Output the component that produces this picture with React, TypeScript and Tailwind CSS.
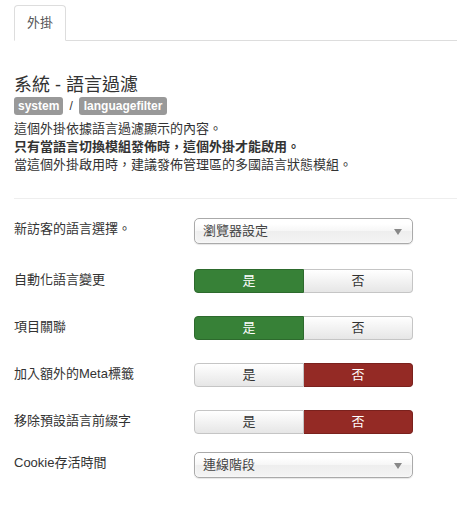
import React from "react";

const font = { fontFamily: '"Liberation Sans", "Noto Sans CJK TC", sans-serif' };

function Select({ value }: { value: string }) {
  return (
    <div className="relative w-[219px] h-[26px] rounded-[5px] border border-[#aaa] bg-[linear-gradient(#ffffff_20%,#f6f6f6_50%,#eeeeee_52%,#f4f4f4_100%)] shadow-[inset_0_0_3px_#fff,0_1px_1px_rgba(0,0,0,0.1)] flex items-center pl-[8px] text-[13px] text-[#444]">
      <span>{value}</span>
      <span className="absolute right-[10px] top-[10px] w-0 h-0 border-l-[4px] border-r-[4px] border-t-[6px] border-l-transparent border-r-transparent border-t-[#888]" />
    </div>
  );
}

function Toggle({ yes }: { yes: boolean }) {
  const off =
    "bg-[linear-gradient(#ffffff,#e6e6e6)] text-[#333] border-[#c5c5c5]";
  return (
    <div className="flex w-[219px] h-[24px] text-[13px]">
      <div
        className={
          "flex-1 flex items-center justify-center rounded-l-[4px] border " +
          (yes
            ? "bg-[#378137] text-white border-[#2d6a2d]"
            : off)
        }
      >
        是
      </div>
      <div
        className={
          "flex-1 flex items-center justify-center rounded-r-[4px] border border-l-0 " +
          (!yes
            ? "bg-[#942a25] text-white border-[#7a211d]"
            : off)
        }
      >
        否
      </div>
    </div>
  );
}

function Row({
  label,
  mt,
  children,
}: {
  label: string;
  mt: string;
  children: React.ReactNode;
}) {
  return (
    <div className={"flex items-start " + mt}>
      <div className="w-[180px] pt-[2px] leading-[18px] text-[13px] text-[#333]">{label}</div>
      {children}
    </div>
  );
}

export default function App() {
  return (
    <div className="w-[457px] h-[515px] bg-white overflow-hidden" style={font}>
      <div className="pt-[5px] pl-[14px]">
        <div className="flex border-b border-[#ddd] h-[36px]">
          <div className="h-[36px] px-[12px] border border-[#ddd] border-b-white rounded-t-[4px] bg-white flex items-center text-[13px] text-[#555] -mb-px">
            外掛
          </div>
        </div>
        <div className="mt-[34px] text-[18px] leading-[20px] text-[#333]">系統 - 語言過濾</div>
        <div className="mt-[2px] flex items-center gap-[6px] text-[12px]">
          <span className="bg-[#999] text-white font-bold rounded-[3px] px-[4px] h-[18px] leading-[18px]">system</span>
          <span className="text-[#333]">/</span>
          <span className="bg-[#999] text-white font-bold rounded-[3px] px-[5px] h-[18px] leading-[18px]">languagefilter</span>
        </div>
        <div className="mt-[5px] text-[13px] leading-[18px] text-[#333]">
          <p>這個外掛依據語言過濾顯示的內容。</p>
          <p className="font-bold">只有當語言切換模組發佈時，這個外掛才能啟用。</p>
          <p>當這個外掛啟用時，建議發佈管理區的多國語言狀態模組。</p>
        </div>
        <div className="mt-[24px] h-px bg-[#eee]" />
        <Row label="新訪客的語言選擇。" mt="mt-[19px]">
          <Select value="瀏覽器設定" />
        </Row>
        <Row label="自動化語言變更" mt="mt-[25px]">
          <Toggle yes />
        </Row>
        <Row label="項目關聯" mt="mt-[23px]">
          <Toggle yes />
        </Row>
        <Row label="加入額外的Meta標籤" mt="mt-[23px]">
          <Toggle yes={false} />
        </Row>
        <Row label="移除預設語言前綴字" mt="mt-[23px]">
          <Toggle yes={false} />
        </Row>
        <Row label="Cookie存活時間" mt="mt-[18px]">
          <Select value="連線階段" />
        </Row>
      </div>
    </div>
  );
}
